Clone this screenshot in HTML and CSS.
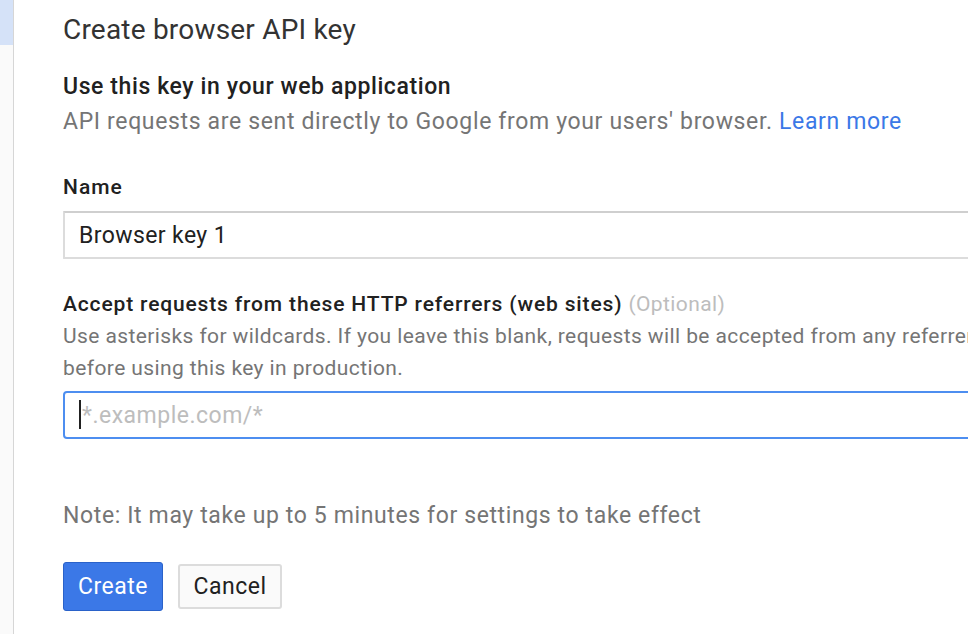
FILE: index.html
```html
<!DOCTYPE html>
<html>
<head>
<meta charset="utf-8">
<link rel="stylesheet" href="styles.css">
</head>
<body>
<div class="page">
  <aside class="sidebar">
    <div class="sidebar-active"></div>
  </aside>
  <main class="main">
    <h1 class="title">Create browser API key</h1>
    <h2 class="subtitle">Use this key in your web application</h2>
    <p class="desc">API requests are sent directly to Google from your users' browser. <a class="link" href="#">Learn more</a></p>

    <label class="label label-name">Name</label>
    <div class="field">
      <input class="input" type="text" value="Browser key 1">
    </div>

    <label class="label label-ref">Accept requests from these HTTP referrers (web sites) <span class="optional">(Optional)</span></label>
    <p class="hint">Use asterisks for wildcards. If you leave this blank, requests will be accepted from any referrer.<br>before using this key in production.</p>
    <div class="field field-focus">
      <input class="input input-focus" type="text" placeholder="*.example.com/*">
      <span class="caret"></span>
    </div>

    <p class="note">Note: It may take up to 5 minutes for settings to take effect</p>

    <div class="actions">
      <button class="btn btn-primary">Create</button>
      <button class="btn btn-secondary">Cancel</button>
    </div>
  </main>
</div>
</body>
</html>
```
FILE: styles.css
```css
html, body {
  margin: 0;
  padding: 0;
  background: #ffffff;
  overflow: hidden;
}
body {
  width: 968px;
  height: 634px;
  font-family: Roboto, "Liberation Sans", Arial, sans-serif;
}
.page {
  display: flex;
  height: 634px;
}
.sidebar {
  width: 13px;
  flex: 0 0 13px;
  background: #fafafa;
  border-right: 1px solid #d6d6d6;
}
.sidebar-active {
  height: 45px;
  background: #d5e2f8;
}
.main {
  flex: 1 1 auto;
  min-width: 0;
  padding: 12px 0 0 49px;
  white-space: nowrap;
}
.title {
  margin: 0;
  font-size: 28px;
  line-height: 36px;
  font-weight: 400;
  color: #333333;
  letter-spacing: 0.2px;
}
.subtitle {
  margin: 23px 0 0;
  font-size: 23px;
  line-height: 32px;
  font-weight: 500;
  color: #212121;
  letter-spacing: 0.6px;
}
.desc {
  margin: 3px 0 0;
  font-size: 23px;
  line-height: 32px;
  color: #757575;
  letter-spacing: 0.65px;
}
.link {
  color: #3b78e7;
  text-decoration: none;
}
.label {
  display: block;
  font-size: 21px;
  line-height: 32px;
  font-weight: 500;
  color: #212121;
  letter-spacing: 0.85px;
}
.label-name {
  margin-top: 33px;
  letter-spacing: 1px;
}
.label-ref {
  margin-top: 29px;
}
.optional {
  font-weight: 400;
  color: #bdbdbd;
  letter-spacing: 0.4px;
}
.field {
  position: relative;
  margin-top: 8px;
  width: 1000px;
}
.field-focus {
  margin-top: 7px;
}
.input {
  display: block;
  box-sizing: border-box;
  width: 1000px;
  height: 48px;
  margin: 0;
  padding: 0 0 0 14px;
  border: 2px solid #dcdcdc;
  border-top-color: #cfcfcf;
  border-radius: 1px;
  background: #ffffff;
  font-family: Roboto, "Liberation Sans", Arial, sans-serif;
  font-size: 23px;
  letter-spacing: 0.4px;
  color: #212121;
  outline: none;
}
.input-focus {
  border: 2px solid #4d8ef0;
  border-radius: 4px;
  padding-left: 17px;
  letter-spacing: 0.5px;
}
.input-focus::placeholder {
  color: #bdbdbd;
}
.caret {
  position: absolute;
  left: 16px;
  top: 9px;
  width: 2px;
  height: 29px;
  background: #212121;
}
.hint {
  margin: 0;
  font-size: 21px;
  line-height: 32px;
  color: #757575;
  letter-spacing: 0.4px;
}
.note {
  margin: 61px 0 0;
  font-size: 23px;
  line-height: 32px;
  color: #757575;
  letter-spacing: 0.62px;
}
.actions {
  display: flex;
  align-items: center;
  gap: 15px;
  margin-top: 30px;
}
.btn {
  font-family: Roboto, "Liberation Sans", Arial, sans-serif;
  font-size: 23px;
  letter-spacing: 0.5px;
  padding: 0;
  cursor: pointer;
}
.btn-primary {
  width: 100px;
  height: 49px;
  background: #3b78e7;
  border: 1px solid #2a62c9;
  border-radius: 3px;
  color: #ffffff;
}
.btn-secondary {
  width: 104px;
  height: 45px;
  background: #fafafa;
  border: 2px solid #dcdcdc;
  border-radius: 3px;
  color: #212121;
}
```
